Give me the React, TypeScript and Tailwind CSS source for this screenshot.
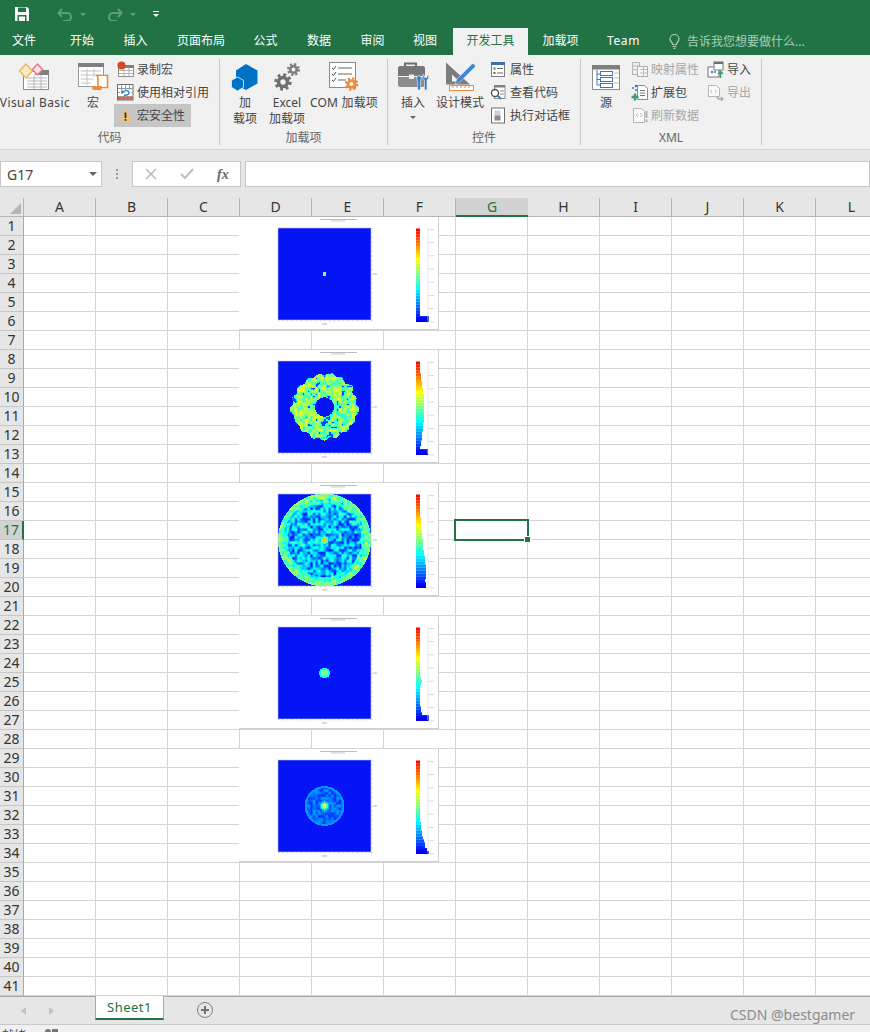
import React, { useMemo } from "react";

const hash = (x: number, y: number, s: number) => {
  const v = Math.sin(x * 127.1 + y * 311.7 + s * 74.7) * 43758.5453;
  return v - Math.floor(v);
};
const noise = (x: number, y: number, s: number) => {
  const ix = Math.floor(x), iy = Math.floor(y);
  let fx = x - ix, fy = y - iy;
  fx = fx * fx * (3 - 2 * fx);
  fy = fy * fy * (3 - 2 * fy);
  const a = hash(ix, iy, s), b = hash(ix + 1, iy, s), c = hash(ix, iy + 1, s), d = hash(ix + 1, iy + 1, s);
  return a + (b - a) * fx + (c - a) * fy + (a - b - c + d) * fx * fy;
};
const jet = (v: number) => {
  const c = (t: number) => Math.round(255 * Math.max(0, Math.min(1, 1.5 - Math.abs(4 * v - t))));
  return `rgb(${c(3)},${c(2)},${c(1)})`;
};
const BLUE = "#0414f5";

const value = (t: number, dx: number, dy: number) => {
  const r = Math.hypot(dx, dy);
  const n = noise(dx / 2.6 + 30, dy / 2.6 + 30, t + 3);
  const ang = Math.atan2(dy, dx);
  if (t === 0) return r < 2 ? 0.5 : 0;
  if (t === 1) {
    const edge = 31 + 3 * noise(Math.cos(ang) * 5 + 9, Math.sin(ang) * 5 + 9, 5) + 1.2 * Math.sin(ang * 17);
    if (r < 9.6 || r > edge) return 0;
    if (n < 0.16) return 0.2;
    return 0.34 + 0.3 * n;
  }
  if (t === 2) {
    if (r > 46.5) return 0;
    if (r < 2.2) return 0.68;
    if (r < 4) return 0.46;
    if (r > 41) return 0.38 + 0.2 * n;
    if (r > 37) return 0.28 + 0.24 * n;
    return 0.14 + 0.32 * n;
  }
  if (t === 3) {
    if (r > 5.4) return 0;
    return r < 3.4 ? 0.5 : 0.38;
  }
  if (r < 2) return 0.62;
  if (r < 3.6) return 0.44;
  if (r < 5) return 0.3;
  if (r > 19.8) return 0;
  if (r > 17.8) return 0.27;
  return 0.16 + 0.13 * n;
};

const profiles: number[][] = [
  [4,4,4,4,4,4,4,4,4,4,4,4,4,4,4,4,4,4,4,4,4,4,4,4,4,4,4,4,4,4,13,13],
  [4,4,4,4,5,5,5,6,6,7,7,8,8,8,8,8,8,8,8,8,8,7,7,7,6,6,6,5,5,4,12,12],
  [4,4,4,4,4,4,4,4,5,5,5,5,6,6,6,7,7,7,7,8,8,9,9,9,10,10,10,10,10,9,10,10],
  [4,4,4,4,4,4,4,4,4,4,4,4,4,4,4,4,4,5,6,5,4,4,4,4,4,4,4,5,5,6,13,13],
  [4,4,4,4,4,4,4,4,4,4,4,4,4,4,4,4,4,4,4,4,4,5,5,5,6,6,7,8,9,9,11,13],
];

function Chart({ type, top }: { type: number; top: string }) {
  const cells = useMemo(() => {
    const out: React.ReactNode[] = [];
    for (let y = 0; y < 92; y++) {
      let x = 0;
      while (x < 93) {
        const q = (px: number) => Math.round(value(type, px + 0.5 - 46.5, y + 0.5 - 46) * 40);
        const v = q(x);
        let e = x + 1;
        while (e < 93 && q(e) === v) e++;
        if (v > 0) out.push(<rect key={`${x}-${y}`} x={39 + x} y={11 + y} width={e - x} height={1} fill={jet(v / 40)} />);
        x = e;
      }
    }
    return out;
  }, [type]);
  const ticks = Array.from({ length: 21 }, (_, i) => i);
  return (
    <div className={`absolute left-[239px] w-[200px] h-[113px] bg-white border-r border-b border-[#d0d0d0] ${top}`}>
      <svg width="199" height="112" viewBox="0 0 199 112" className="block">
        <defs>
          <filter id={`b${type}`} x="-5%" y="-5%" width="110%" height="110%"><feGaussianBlur stdDeviation="0.6" /></filter>
          <clipPath id={`c${type}`}><rect x="39" y="11" width="93" height="92" /></clipPath>
        </defs>
        <rect x="81" y="2" width="37" height="0.9" fill="#b5b5b5" />
        <rect x="92" y="3.5" width="14" height="0.9" fill="#c4c4c4" />
        <rect x="39" y="11" width="93" height="92" fill={BLUE} />
        <g clipPath={`url(#c${type})`}><g filter={`url(#b${type})`}>{cells}</g></g>
        <rect x="39" y="11" width="93" height="92" fill="none" stroke="#bcc4ee" strokeWidth="0.6" />
        {ticks.map((i) => (
          <g key={i}>
            <rect x={39 + i * 4.65} y="103" width="0.7" height="1.4" fill="#c4c4c4" />
            <rect x="132" y={11 + i * 4.6} width="1.4" height="0.7" fill="#c4c4c4" />
          </g>
        ))}
        <rect x="134" y="56.5" width="4" height="1" fill="#bbb" />
        <rect x="83" y="106.5" width="5" height="1" fill="#b5b5b5" />
        {profiles[type].map((w, i) => (
          <rect key={i} x="177" y={11.5 + i * 2.92} width={w} height="3" fill={jet(0.87 - (i / 31) * 0.76)} />
        ))}
        <rect x="188.6" y="11" width="0.7" height="93" fill="#dedede" />
        {[0, 1, 2, 3, 4, 5, 6, 7].map((i) => (
          <g key={i}>
            <rect x="189" y={12 + i * 13.2} width="1.3" height="0.7" fill="#ccc" />
            <rect x="191" y={12 + i * 13.2} width="4" height="0.9" fill="#d4d4d4" />
          </g>
        ))}
      </svg>
    </div>
  );
}

const Gear = ({ cx, cy, r, fill }: { cx: number; cy: number; r: number; fill: string }) => {
  const c = 2 * Math.PI * r;
  return (
    <g>
      <circle cx={cx} cy={cy} r={r} fill="none" stroke={fill} strokeWidth={r * 0.42} strokeDasharray={`${c / 16} ${c / 16}`} />
      <circle cx={cx} cy={cy} r={r * 0.62} fill="none" stroke={fill} strokeWidth={r * 0.5} />
    </g>
  );
};

const VbIcon = () => (
  <svg width="32" height="30" viewBox="0 0 32 30">
    <rect x="4.5" y="9.5" width="25" height="18" fill="#fff" stroke="#8a8a8a" />
    <rect x="16" y="8" width="14" height="5" fill="#7f7f7f" />
    <path d="M8 16h20M8 19h20M8 22h20M8 25h20M15 13v14M22 13v14" stroke="#b8b8b8" />
    <path d="M7 2l6.500 7L7 16 .5 9z" fill="#fde9bd" stroke="#e8b964" strokeWidth="1.500" />
    <path d="M18.500 2l5 5.500-5 5.500-5-5.500z" fill="#fde3e6" stroke="#df7b8c" strokeWidth="1.500" />
  </svg>
);
const MacroIcon = () => (
  <svg width="32" height="30" viewBox="0 0 32 30">
    <rect x="1.5" y="1.5" width="25" height="23" fill="#fff" stroke="#9a9a9a" />
    <rect x="1" y="1" width="26" height="4" fill="#7f7f7f" />
    <path d="M4 9h20M4 13h20M4 17h12M4 21h10M10 7v16M17 7v8" stroke="#c2c2c2" />
    <path d="M19 13.500h11.500v12h-8v-1" fill="#fff" stroke="#ed8b3a" strokeWidth="1.600" />
    <rect x="19" y="14" width="10" height="11" fill="#fff" />
    <path d="M19 13.500c2 0 2 2 2 3v8" fill="none" stroke="#ed8b3a" strokeWidth="1.600" />
    <path d="M15 26c0-1 1-2 2.500-2H25c-1 1-1 3 0 4h-8c-1 0-2-1-2-2z" fill="#ed8b3a" />
  </svg>
);
const RecIcon = () => (
  <svg width="17" height="17" viewBox="0 0 17 17">
    <rect x="1.500" y="6.500" width="15" height="9" fill="#fff" stroke="#8f8f8f" />
    <rect x="8" y="4" width="9" height="3" fill="#7f7f7f" />
    <path d="M2 9.500h14M2 12.500h14M7 7v8M12 7v8" stroke="#b5b5b5" />
    <circle cx="4.500" cy="4.500" r="4" fill="#d14a2b" />
  </svg>
);
const RelIcon = () => (
  <svg width="17" height="17" viewBox="0 0 17 17">
    <rect x=".5" y=".5" width="15.500" height="15.500" fill="#fff" stroke="#6f6f6f" />
    <path d="M1 4.500h15M1 8.500h15M1 12.500h15M4.500 1v15M8.500 1v15M12.500 1v15" stroke="#9a9a9a" />
    <rect x="3" y="6" width="11" height="6" fill="#fff" />
    <rect x="1" y="13" width="3" height="3" fill="#d9634a" />
    <rect x="5" y="13" width="3" height="3" fill="#d9634a" />
    <rect x="9" y="13" width="3" height="3" fill="#d9634a" />
    <rect x="13" y="13" width="3" height="3" fill="#d9634a" />
    <path d="M6 8c2-2 6-2 6 1 0 2-3 2.500-5 2" fill="none" stroke="#2b7cd3" strokeWidth="1.400" />
    <path d="M4 6l.5 4 3.500-2z" fill="#2b7cd3" />
  </svg>
);
const WarnIcon = () => (
  <svg width="17" height="17" viewBox="0 0 17 17">
    <path d="M8.500 1.500L16 15H1z" fill="#eec17a" />
    <rect x="7.600" y="5.500" width="1.800" height="5.500" fill="#333" />
    <rect x="7.600" y="12" width="1.800" height="1.800" fill="#333" />
  </svg>
);
const AddinIcon = () => (
  <svg width="30" height="30" viewBox="0 0 30 30">
    <path d="M16 2l11.500 6.500v13L16 28 6 23V8.500z" fill="#0072c6" />
    <path d="M7.500 15l6 3.300v7L7.500 29l-6-3.700v-7z" fill="#0072c6" stroke="#f1f1f1" strokeWidth="0.800" />
  </svg>
);
const GearsIcon = () => (
  <svg width="30" height="30" viewBox="0 0 30 30">
    <Gear cx={11} cy={20} r={7.200} fill="#6f6f6f" />
    <Gear cx={21.500} cy={7.500} r={5.400} fill="#7f7f7f" />
  </svg>
);
const ComIcon = () => (
  <svg width="32" height="32" viewBox="0 0 32 32">
    <rect x="1.500" y="1.500" width="26" height="25" fill="#fff" stroke="#8a8a8a" />
    <path d="M4 7l1.500 1.500L8 5M4 13l1.500 1.500L8 11M4 19l1.500 1.500L8 17" fill="none" stroke="#555" />
    <path d="M10 7h14M10 13h14M10 19h8" stroke="#666" />
    <Gear cx={23.500} cy={23} r={5.600} fill="#ed8b3a" />
  </svg>
);
const ToolboxIcon = () => (
  <svg width="32" height="30" viewBox="0 0 32 30">
    <path d="M8 5V1.500h11V5" fill="none" stroke="#6f6f6f" strokeWidth="2" />
    <path d="M1 6c0-1 1-2 2-2h23c1 0 2 1 2 2v8H1z" fill="#777" />
    <path d="M1 15h27v8c0 1-1 2-2 2H3c-1 0-2-1-2-2z" fill="#8c8c8c" />
    <rect x="12" y="12.500" width="5" height="4.500" fill="#eee" />
    <path d="M20 14h4v4l-.6 1v8c0 1.500-2.800 1.500-2.800 0v-8L20 18z" fill="#2b7cd3" stroke="#f1f1f1" strokeWidth="0.600" />
    <path d="M26 12v4c0 1 1.500 1.500 1.500 2.500V27c0 1.500 2.500 1.500 2.500 0v-8.500c0-1 1.500-1.500 1.500-2.500v-4l-1.500 2v1.500h-2.500V14z" fill="#2b7cd3" stroke="#f1f1f1" strokeWidth="0.600" />
  </svg>
);
const DesignIcon = () => (
  <svg width="32" height="32" viewBox="0 0 32 32">
    <path d="M2 1.500L26 23.500H2zM8 13.500v7h7.500z" fill="#7c7c7c" fillRule="evenodd" />
    <path d="M10.500 24l2.500-6L27.500 3.500c1-1 2-1 3 0s1 2 0 3L16 21z" fill="#3f86cf" stroke="#f1f1f1" strokeWidth="0.500" />
    <rect x="5.500" y="24.500" width="24" height="5" fill="#fff" stroke="#ed8b3a" />
    <path d="M9 25v2M13 25v2M17 25v2M21 25v2M25 25v2" stroke="#ed8b3a" />
  </svg>
);
const PropIcon = () => (
  <svg width="17" height="17" viewBox="0 0 17 17">
    <rect x="1.500" y="1.500" width="13" height="14" fill="#fff" stroke="#7f7f7f" />
    <rect x="1" y="1" width="14" height="3" fill="#3f6fa8" />
    <rect x="3.500" y="6.500" width="2" height="2" fill="#666" />
    <rect x="3.500" y="11" width="2" height="2" fill="#666" />
    <path d="M7 7.500h6M7 12h6" stroke="#666" />
  </svg>
);
const CodeIcon = () => (
  <svg width="17" height="17" viewBox="0 0 17 17">
    <rect x="4.500" y="1.500" width="10.500" height="13" fill="#fff" stroke="#8f8f8f" />
    <rect x="4" y="1" width="11" height="2.500" fill="#7f7f7f" />
    <path d="M10 7h4M10 10h4" stroke="#888" />
    <circle cx="5" cy="9" r="3.500" fill="#fff" stroke="#4c4c4c" strokeWidth="1.300" />
    <path d="M7.500 11.500L11 15" stroke="#2b7cd3" strokeWidth="1.800" />
  </svg>
);
const DialogIcon = () => (
  <svg width="17" height="17" viewBox="0 0 17 17">
    <rect x="1.500" y="1" width="13" height="15" fill="#fff" stroke="#6f6f6f" />
    <rect x="4.500" y="3.500" width="6" height="5" fill="#d0d0d0" />
    <rect x="4.500" y="8.500" width="6" height="5" fill="#8a8a8a" />
  </svg>
);
const SourceIcon = () => (
  <svg width="30" height="30" viewBox="0 0 30 30">
    <rect x="1.500" y="3.500" width="27" height="24" fill="#fff" stroke="#8f8f8f" />
    <rect x="1" y="3" width="28" height="4.500" fill="#7f7f7f" />
    <path d="M23 11h5M23 16h5M23 21h5" stroke="#bbb" />
    <path d="M6 8v15M6 12h4M6 17.500h4M6 23h4" stroke="#3f78b8" />
    <rect x="9.500" y="9.500" width="12" height="4" fill="#fff" stroke="#3f78b8" />
    <rect x="9.500" y="15.500" width="12" height="4" fill="#fff" stroke="#3f78b8" />
    <rect x="9.500" y="21.500" width="12" height="4" fill="#fff" stroke="#3f78b8" />
  </svg>
);
const MapIcon = () => (
  <svg width="17" height="17" viewBox="0 0 17 17">
    <rect x="1.500" y="1.500" width="7" height="12" fill="#eee" stroke="#b5b5b5" />
    <rect x="6.500" y="5.500" width="10" height="10" fill="#f6f6f6" stroke="#b0b0b0" />
    <path d="M2 5h6M2 8.500h4M9 8.500h7M9 12h7M12.500 6v9" stroke="#bdbdbd" />
  </svg>
);
const PackIcon = () => (
  <svg width="17" height="17" viewBox="0 0 17 17">
    <path d="M6.500 1.500h7l3 3v11h-10z" fill="#fff" stroke="#8a8a8a" />
    <path d="M9 6.500h5M9 9h5M9 11.500h5" stroke="#777" />
    <circle cx="5" cy="2" r="1.300" fill="#2b7cd3" />
    <circle cx="2" cy="4" r="1" fill="#2b7cd3" />
    <circle cx="5" cy="6" r="1" fill="#2b7cd3" />
    <path d="M4 9.500v7M0.500 13h7" stroke="#3f9a74" strokeWidth="2.400" />
  </svg>
);
const RefreshIcon = () => (
  <svg width="17" height="17" viewBox="0 0 17 17">
    <path d="M2.500 1.500h8l3 3v11h-11z" fill="#fafafa" stroke="#b5b5b5" />
    <path d="M7 6L5 8l2 2M9 6l2 2-2 2" fill="none" stroke="#bbb" />
    <rect x="14.500" y="4" width="2" height="7" fill="#b0b0b0" />
    <rect x="14.500" y="12.500" width="2" height="2.500" fill="#b0b0b0" />
  </svg>
);
const ImportIcon = () => (
  <svg width="17" height="17" viewBox="0 0 17 17">
    <rect x="1" y="6" width="11" height="10" fill="#fff" stroke="#777" />
    <rect x="7" y="1" width="9" height="8" fill="#fff" stroke="#777" />
    <rect x="7" y="1" width="9" height="2" fill="#6f6f6f" />
    <circle cx="5" cy="11" r="1.200" fill="#2b7cd3" />
    <circle cx="8" cy="11" r="1" fill="#2b7cd3" />
    <path d="M13.500 17v-6M11 13l2.500-2.500L16 13" fill="none" stroke="#3f9a74" strokeWidth="1.600" />
  </svg>
);
const ExportIcon = () => (
  <svg width="17" height="17" viewBox="0 0 17 17">
    <path d="M1.500 1.500h8l3 3v8h-11z" fill="#fafafa" stroke="#b5b5b5" />
    <path d="M5 6L3.500 7.500 5 9M8 6l1.500 1.500L8 9" fill="none" stroke="#bbb" />
    <path d="M10 12c0 2 1 3 3 3h3M14 13l2 2-2 2" fill="none" stroke="#aaa" strokeWidth="1.400" />
  </svg>
);

function Large({ icon, lines, w, ml }: { icon: React.ReactNode; lines: string[]; w: string; ml: string }) {
  return (
    <div className={`flex flex-col items-center ${w} ${ml}`}>
      <div className="h-[37px] flex items-center justify-center">{icon}</div>
      {lines.map((l) => (
        <div key={l} className="leading-[16px] whitespace-nowrap">{l}</div>
      ))}
    </div>
  );
}
function Small({ icon, text, off, cls }: { icon: React.ReactNode; text: string; off?: boolean; cls?: string }) {
  return (
    <div className={`h-[23px] flex items-center gap-[3px] pl-[3px] whitespace-nowrap ${off ? "text-[#a6a6a6]" : ""} ${cls ?? ""}`}>
      <div className="w-[17px] h-[17px] shrink-0">{icon}</div>
      <span>{text}</span>
    </div>
  );
}
function Group({ w, label, children }: { w: string; label: string; children: React.ReactNode }) {
  return (
    <div className={`${w} flex flex-col pt-[3px]`}>
      <div className="flex h-[70px]">{children}</div>
      <div className="text-center text-[#666] leading-[20px]">{label}</div>
    </div>
  );
}
const Divider = () => <div className="w-px my-[4px] bg-[#c9c9c9]" />;

const tabs: [string, string][] = [
  ["文件", "w-[56px] pr-[8px]"],
  ["开始", "w-[52px]"],
  ["插入", "w-[55px]"],
  ["页面布局", "w-[76px]"],
  ["公式", "w-[53px]"],
  ["数据", "w-[54px]"],
  ["审阅", "w-[53px]"],
  ["视图", "w-[54px] pr-[2px]"],
];
const cols = ["A", "B", "C", "D", "E", "F", "G", "H", "I", "J", "K", "L"];
const rows = Array.from({ length: 41 }, (_, i) => i + 1);

export default function App() {
  return (
    <div className="h-[1032px] w-full overflow-hidden flex flex-col relative text-[12px] text-[#444] bg-white font-['Noto_Sans','Noto_Sans_CJK_SC',sans-serif]">
      {/* quick access */}
      <div className="h-[28px] bg-[#217346] flex items-center shrink-0">
        <svg width="16" height="16" viewBox="0 0 16 16" className="ml-[14px]">
          <path d="M1 1h12l2 2v12H1z" fill="#fff" />
          <rect x="4" y="1.500" width="8" height="4.500" fill="#217346" />
          <rect x="3.500" y="9" width="9" height="6" fill="#217346" />
          <rect x="5" y="10.500" width="6" height="4.500" fill="#fff" />
        </svg>
        <svg width="16" height="14" viewBox="0 0 16 14" className="ml-[27px]" fill="none" stroke="#5f9e7d" strokeWidth="2">
          <path d="M2 6h8a4 4 0 010 8H6M5 2L1.500 6 5 10" />
        </svg>
        <div className="ml-[7px] w-0 h-0 border-x-[3px] border-x-transparent border-t-[3px] border-t-[#5f9e7d]" />
        <svg width="16" height="14" viewBox="0 0 16 14" className="ml-[21px]" fill="none" stroke="#5f9e7d" strokeWidth="2">
          <path d="M14 6H6a4 4 0 000 8h4M11 2l3.500 4L11 10" />
        </svg>
        <div className="ml-[7px] w-0 h-0 border-x-[3px] border-x-transparent border-t-[3px] border-t-[#5f9e7d]" />
        <div className="ml-[17px] flex flex-col items-center gap-[2px]">
          <div className="w-[6px] h-px bg-white" />
          <div className="w-0 h-0 border-x-[3px] border-x-transparent border-t-[3px] border-t-white" />
        </div>
      </div>
      {/* tabs */}
      <div className="h-[27px] bg-[#217346] flex shrink-0 text-white leading-[26px]">
        {tabs.map(([t, w]) => (
          <div key={t} className={`${w} text-center`}>{t}</div>
        ))}
        <div className="w-[75px] text-center bg-[#f1f1f1] text-[#217346]">开发工具</div>
        <div className="w-[67px] text-center pr-[2px]">加载项</div>
        <div className="w-[57px] text-center tracking-[0.6px]">Team</div>
        <div className="ml-[17px] flex items-center gap-[7px] text-[#a9cfba]">
          <svg width="11" height="15" viewBox="0 0 11 15" fill="none" stroke="#a9cfba" strokeWidth="1.200">
            <path d="M3.500 10.500C3.500 8 1 7.500 1 5a4.500 4.500 0 019 0c0 2.500-2.500 3-2.500 5.500zM3.500 12.500h4M4.500 14.300h2" />
          </svg>
          <span>告诉我您想要做什么...</span>
        </div>
      </div>
      {/* ribbon */}
      <div className="h-[95px] bg-[#f1f1f1] border-b border-[#d4d4d4] flex shrink-0">
        <Group w="w-[219px]" label="代码">
          <Large icon={<VbIcon />} lines={["Visual Basic"]} w="w-[70px] tracking-[0.4px]" ml="" />
          <Large icon={<MacroIcon />} lines={["宏"]} w="w-[32px]" ml="ml-[7px]" />
          <div className="ml-[5px] flex flex-col">
            <Small icon={<RecIcon />} text="录制宏" />
            <Small icon={<RelIcon />} text="使用相对引用" />
            <Small icon={<WarnIcon />} text="宏安全性" cls="bg-[#c6c6c6] w-[77px] gap-[2px]" />
          </div>
        </Group>
        <Divider />
        <Group w="w-[167px]" label="加载项">
          <Large icon={<AddinIcon />} lines={["加", "载项"]} w="w-[36px]" ml="ml-[7px]" />
          <Large icon={<GearsIcon />} lines={["Excel", "加载项"]} w="w-[36px]" ml="ml-[6px]" />
          <Large icon={<ComIcon />} lines={["COM 加载项"]} w="w-[70px] tracking-[0.2px]" ml="ml-[4px]" />
        </Group>
        <Divider />
        <Group w="w-[192px]" label="控件">
          <div className="ml-[7px] w-[36px] flex flex-col items-center">
            <div className="h-[37px] flex items-center"><ToolboxIcon /></div>
            <div className="leading-[16px]">插入</div>
            <div className="mt-[5px] w-0 h-0 border-x-[3px] border-x-transparent border-t-[3px] border-t-[#666]" />
          </div>
          <Large icon={<DesignIcon />} lines={["设计模式"]} w="w-[48px]" ml="ml-[5px]" />
          <div className="ml-[3px] flex flex-col">
            <Small icon={<PropIcon />} text="属性" />
            <Small icon={<CodeIcon />} text="查看代码" />
            <Small icon={<DialogIcon />} text="执行对话框" cls="gap-[2px]" />
          </div>
        </Group>
        <Divider />
        <Group w="w-[180px]" label="XML">
          <Large icon={<SourceIcon />} lines={["源"]} w="w-[36px]" ml="ml-[7px]" />
          <div className="ml-[4px] w-[76px] flex flex-col">
            <Small icon={<MapIcon />} text="映射属性" off cls="gap-[2px]" />
            <Small icon={<PackIcon />} text="扩展包" cls="gap-[2px]" />
            <Small icon={<RefreshIcon />} text="刷新数据" off cls="gap-[2px]" />
          </div>
          <div className="flex flex-col">
            <Small icon={<ImportIcon />} text="导入" />
            <Small icon={<ExportIcon />} text="导出" off />
          </div>
        </Group>
        <Divider />
      </div>
      {/* formula bar */}
      <div className="h-[48px] bg-[#e6e6e6] shrink-0 pt-[11px] flex items-start">
        <div className="w-[102px] h-[26px] bg-white border border-[#c6c6c6] flex items-center justify-between pl-[6px] pr-[4px] text-[14px] text-[#444]">
          <span>G17</span>
          <div className="w-0 h-0 border-x-[4px] border-x-transparent border-t-[4px] border-t-[#666]" />
        </div>
        <div className="w-[30px] h-[26px] flex flex-col items-center justify-center gap-[2px]">
          <div className="w-[2px] h-[2px] bg-[#999]" />
          <div className="w-[2px] h-[2px] bg-[#999]" />
          <div className="w-[2px] h-[2px] bg-[#999]" />
        </div>
        <div className="w-[109px] h-[26px] bg-white border border-[#c6c6c6] flex items-center relative">
          <svg width="12" height="12" viewBox="0 0 12 12" className="ml-[12px]" stroke="#bdbdbd" strokeWidth="1.600"><path d="M1 1l10 10M11 1L1 11" /></svg>
          <svg width="14" height="12" viewBox="0 0 14 12" className="ml-[23px]" fill="none" stroke="#bdbdbd" strokeWidth="2"><path d="M1 6l4 4 8-9" /></svg>
          <span className="ml-[23px] font-['Liberation_Serif',serif] italic font-bold text-[14px] text-[#666]">fx</span>
        </div>
        <div className="ml-[4px] flex-1 h-[26px] bg-white border border-[#c6c6c6]" />
      </div>
      {/* grid */}
      <div className="h-[798px] shrink-0 relative overflow-hidden">
        <div className="grid grid-cols-[24px_repeat(12,72px)] auto-rows-[19px] w-[888px] text-[14px] text-[#333] leading-[18px]">
          <div className="bg-[#e6e6e6] border-r border-b border-[#b4b4b4] flex items-end justify-end pr-[2px] pb-[2px]">
            <div className="w-0 h-0 border-l-[11px] border-l-transparent border-b-[11px] border-b-[#b5b5b5]" />
          </div>
          {cols.map((c) =>
            c === "G" ? (
              <div key={c} className="bg-[#d2d2d2] border-b-2 border-[#217346] text-[#217346] text-center">{c}</div>
            ) : (
              <div key={c} className="bg-[#e6e6e6] border-r border-b border-[#b4b4b4] text-center">{c}</div>
            )
          )}
          {rows.map((r) => (
            <React.Fragment key={r}>
              {r === 17 ? (
                <div className="bg-[#d2d2d2] border-r-2 border-b border-r-[#217346] border-b-[#c6c6c6] text-[#217346] text-center">{r}</div>
              ) : (
                <div className="bg-[#e6e6e6] border-r border-b border-r-[#a8a8a8] border-b-[#c6c6c6] text-center">{r}</div>
              )}
              {cols.map((c) => (
                <div key={c} className="border-r border-b border-[#d4d4d4]" />
              ))}
            </React.Fragment>
          ))}
        </div>
        <Chart type={0} top="top-[19px]" />
        <Chart type={1} top="top-[152px]" />
        <Chart type={2} top="top-[285px]" />
        <Chart type={3} top="top-[418px]" />
        <Chart type={4} top="top-[551px]" />
        {/* active cell */}
        <div className="absolute left-[454px] top-[321px] w-[75px] h-[22px] border-2 border-[#217346]" />
        <div className="absolute left-[524px] top-[338px] w-[7px] h-[7px] bg-[#217346] border border-white" />
      </div>
      {/* sheet tabs */}
      <div className="h-[29px] shrink-0 bg-[#e6e6e6] border-t border-[#a8a8a8] border-b border-b-[#c8c8c8] flex">
        <div className="w-[95px] flex items-center pl-[21px] gap-[23px]">
          <div className="w-0 h-0 border-y-[4px] border-y-transparent border-r-[5px] border-r-[#c2c2c2]" />
          <div className="w-0 h-0 border-y-[4px] border-y-transparent border-l-[5px] border-l-[#c2c2c2]" />
        </div>
        <div className="w-[69px] h-[24px] -mt-px bg-white border-x border-[#a8a8a8] border-b-2 border-b-[#217346] text-[#217346] text-center text-[13px] leading-[23px] tracking-[0.5px]">Sheet1</div>
        <div className="ml-[32px] mt-[4px]">
          <svg width="18" height="18" viewBox="0 0 18 18" fill="none">
            <circle cx="9" cy="9" r="7.500" stroke="#808080" />
            <path d="M9 5v8M5 9h8" stroke="#707070" strokeWidth="2" />
          </svg>
        </div>
      </div>
      {/* status bar */}
      <div className="flex-1 bg-[#f1f1f1] flex items-start pl-[2px] pt-[1px] overflow-hidden">
        <span className="leading-[20px]">就绪</span>
        <div className="ml-[19px] mt-[3px] flex gap-px">
          <div className="w-[6px] h-[6px] rounded-full bg-[#777]" />
          <div className="w-[6px] h-[6px] bg-[#777]" />
        </div>
      </div>
      <div className="absolute left-[730px] top-[1006px] text-[14px] leading-[18px] text-[#8c8c8c] whitespace-nowrap">CSDN @bestgamer</div>
    </div>
  );
}
